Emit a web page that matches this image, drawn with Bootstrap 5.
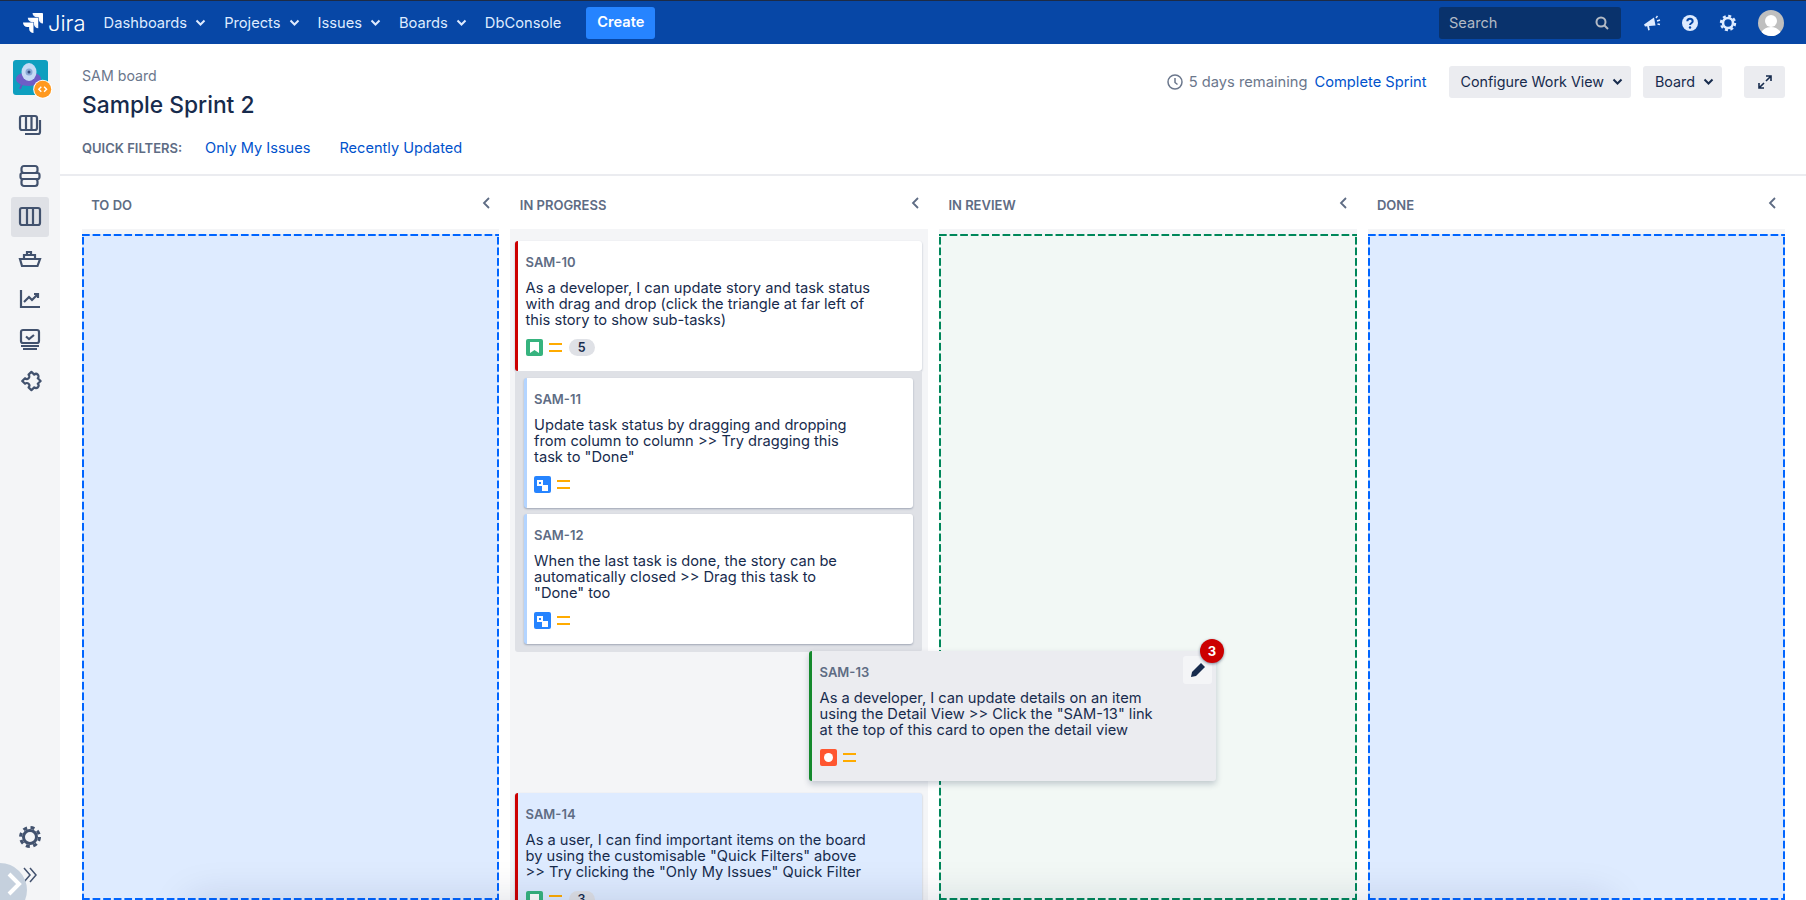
<!DOCTYPE html>
<html lang="en">
<head>
<meta charset="utf-8">
<title>Sample Sprint 2 - Jira</title>
<link rel="stylesheet" href="https://cdn.jsdelivr.net/npm/bootstrap@5.3.0/dist/css/bootstrap.min.css">
<style>
html,body{height:900px;overflow:hidden}
body{font-family:Inter,"Liberation Sans",sans-serif;color:#172b4d;font-size:14.6px;position:relative;background:#fff}
a{text-decoration:none}
.topbar{height:44px;background:#0747a6;border-top:1px solid #1d2b45;padding:1px 22px 0 23px;color:#fff;flex:none}
.brand-word{font-size:22px;font-weight:300;margin-left:5px;color:#fff;line-height:1}
.menu-row{margin-left:18px;gap:18px;font-size:14.7px}
.menu-row a{color:#deebff}
.menu-item{gap:8px}
.make-btn{background:#2684ff;color:#fff;font-weight:600;height:32px;width:69px;margin-left:25px;border-radius:3px;border:0;padding:0;font-size:14.6px}
.make-btn:hover{background:#2684ff;color:#fff}
.find-box{width:182px;height:32px;background:#09326c;border-radius:3px;padding:0 12px 0 10px;color:#b3bac5;font-size:14.6px}
.find-box span{margin-top:1px}
.bar-ico{width:38px}
.avatar-dot{width:26px;height:26px;border-radius:50%;background:#bfbfbf;margin-left:11px;overflow:hidden}
.shell{height:856px}
.rail{width:60px;background:#f4f5f7;flex:none;padding-top:16px;padding-bottom:6px;color:#42526e}
.tile{width:35px;height:35px;margin-left:13px;margin-bottom:10px;position:relative}
.tile svg{overflow:visible}
.rail-ico{height:40px;width:38px;margin-bottom:1px;margin-left:11px;border-radius:3px}
.rail-ico.on{background:#dfe1e6}
.rail-low{height:38px;width:38px;margin-left:11px}
.gap11{margin-bottom:11px}
.fold-knob{position:absolute;left:-27px;bottom:-17px;width:54px;height:54px;border-radius:50%;background:#c5d0dd}
.fold-knob svg{position:absolute;left:33px;top:9px}
.page-top{height:132px;border-bottom:2px solid #ebecf0;padding:22px 21px 0 22px;flex:none}
.crumb{color:#6b778c;font-size:14.2px;line-height:20px}
.sprint-name{font-size:22.8px;font-weight:500;line-height:30px;margin:4px 0 18px;color:#172b4d}
.qf-row{line-height:20px}
.qf-label{font-size:13px;font-weight:600;color:#5e6c84;width:123px}
.qf-row a{color:#0052cc;margin-right:29px;font-size:14.6px}
.days{color:#6b778c;font-size:14.7px;gap:6px;margin-right:7px}
.done-link{color:#0052cc;font-size:14.7px;margin-right:22px}
.grey-btn{background:#ebecf0;color:#172b4d;border:0;border-radius:3px;height:32px;padding:0 12px;font-size:14.3px;gap:8px}
.grey-btn:hover{background:#ebecf0;color:#172b4d}
.board-heads,.board-cols{display:grid;grid-template-columns:repeat(4,1fr);column-gap:11px;padding:0 21px 0 21.6px}
.board-heads{height:53px;flex:none;padding-top:6px}
.col-head{font-size:13px;font-weight:600;color:#5e6c84;padding:0 8px 0 9.6px;text-transform:uppercase}
.col-head svg{margin-top:-6px}
.board-cols{flex:1;min-height:0}
.lane{background:#f4f5f7;padding-top:5px;min-height:0;overflow:visible}
.lane-cards{padding:12px 6px 0 5px;margin-top:-5px}
.drop{height:100%;--dc:#0065ff;background-color:#deebff;background-image:linear-gradient(90deg,var(--dc) 70%,transparent 0),linear-gradient(90deg,var(--dc) 70%,transparent 0),linear-gradient(0deg,var(--dc) 70%,transparent 0),linear-gradient(0deg,var(--dc) 70%,transparent 0);background-size:10.6px 2px,10.6px 2px,2px 10.6px,2px 10.6px;background-position:0 0,0 100%,0 0,100% 0;background-repeat:repeat-x,repeat-x,repeat-y,repeat-y}
.drop.go{--dc:#00875a;background-color:#f2f8f5}
.tkt{background:#fff;border-radius:3px;border-left:3.5px solid #c00;padding:13px 8px 0 7.5px;height:130px;box-shadow:0 1px 2px rgba(9,30,66,.3);line-height:16px;font-size:14.65px;color:#172b4d}
.tkt-key{font-size:13px;font-weight:600;color:#5e6c84;line-height:16px;margin-bottom:10px}
.tkt-meta{margin-top:11px;gap:6px;height:17px}
.kids{background:#dfe1e6;padding:7px 9px 8px;border-radius:0 0 3px 3px;width:407px}
.kid{border-left:3px solid #b3d4ff;padding-left:7px;margin-bottom:6px}
.kid:last-child{margin-bottom:0}
.slot{height:141px;position:relative}
.float-tkt{position:absolute;left:294px;top:-1px;width:407px;background:#ebecf0;border-left-color:#14892c;z-index:5;box-shadow:0 3px 6px rgba(9,30,66,.22)}
.blue-tkt{background:#deebff}
.pen-box{position:absolute;right:4px;top:5px;width:29px;height:28px;background:#f4f5f7;border-radius:3px}
.red-count{position:absolute;right:-8px;top:-12px;width:24px;height:24px;border-radius:50%;background:#c00;color:#fff;font-size:13px;font-weight:700;box-shadow:0 1px 3px rgba(9,30,66,.5)}
.sq{width:17px;height:17px;border-radius:2px;flex:none}
.sq-g{background:#36b37e}.sq-b{background:#2684ff}.sq-r{background:#ff5630}
.pts{min-width:26px;height:17px;border-radius:9px;background:#dfe1e6;font-size:12.5px;font-weight:600;color:#172b4d;margin-left:1px}
.floor-shade{position:absolute;left:190px;width:1420px;top:900px;height:40px;box-shadow:0 0 40px rgba(9,30,66,.15);pointer-events:none;z-index:8;background:#999}
</style>
</head>
<body>
<nav class="topbar d-flex align-items-center">
  <svg width="20" height="20" viewBox="0 0 24 24"><defs><linearGradient id="fade" x1="1" y1="0" x2="0" y2="1"><stop offset=".35" stop-color="#fff"/><stop offset="1" stop-color="#b9cff2"/></linearGradient></defs><path fill="#fff" d="M11.571 11.513H0a5.218 5.218 0 0 0 5.232 5.215h2.13v2.057A5.215 5.215 0 0 0 12.575 24V12.518a1.005 1.005 0 0 0-1.005-1.005z"/><path fill="url(#fade)" d="M17.294 5.757H5.736a5.215 5.215 0 0 0 5.215 5.214h2.129v2.058a5.218 5.218 0 0 0 5.215 5.214V6.758a1.001 1.001 0 0 0-1.001-1.001z"/><path fill="url(#fade)" d="M23.013 0H11.455a5.215 5.215 0 0 0 5.215 5.215h2.129v2.057A5.215 5.215 0 0 0 24 12.483V1.005A1.001 1.001 0 0 0 23.013 0z"/></svg>
  <span class="brand-word">Jira</span>
  <div class="menu-row d-flex align-items-center">
    <a href="#" class="menu-item d-flex align-items-center">Dashboards <svg width="11" height="8" viewBox="0 0 11 8"><path d="M1.5 1.5l4 4 4-4" fill="none" stroke="#deebff" stroke-width="2"/></svg></a>
    <a href="#" class="menu-item d-flex align-items-center">Projects <svg width="11" height="8" viewBox="0 0 11 8"><path d="M1.5 1.5l4 4 4-4" fill="none" stroke="#deebff" stroke-width="2"/></svg></a>
    <a href="#" class="menu-item d-flex align-items-center">Issues <svg width="11" height="8" viewBox="0 0 11 8"><path d="M1.5 1.5l4 4 4-4" fill="none" stroke="#deebff" stroke-width="2"/></svg></a>
    <a href="#" class="menu-item d-flex align-items-center">Boards <svg width="11" height="8" viewBox="0 0 11 8"><path d="M1.5 1.5l4 4 4-4" fill="none" stroke="#deebff" stroke-width="2"/></svg></a>
    <a href="#">DbConsole</a>
  </div>
  <button class="btn make-btn" type="button">Create</button>
  <div class="find-box ms-auto d-flex align-items-center justify-content-between">
    <span>Search</span>
    <svg width="14" height="14" viewBox="0 0 14 14" fill="none" stroke="#b3bac5" stroke-width="2"><circle cx="6" cy="6" r="4.5"/><path d="M9.5 9.5l3.5 3.5"/></svg>
  </div>
  <div class="d-flex align-items-center ms-2 ps-1">
    <div class="bar-ico d-flex justify-content-center"><svg width="18" height="18" viewBox="0 0 18 18" fill="#deebff"><path d="M1 10.500L11 3.500l1.500 8-6.500.6.800 3.900-1.600.4-1-4.200-2.200.2z"/><path d="M13 4l1.500-2M14 7l3-1M14.500 10l2.500.5" stroke="#deebff" stroke-width="1.400" fill="none"/></svg></div>
    <div class="bar-ico d-flex justify-content-center"><svg width="18" height="18" viewBox="0 0 18 18"><circle cx="9" cy="9" r="8" fill="#deebff"/><path d="M6.300 7.200c0-3.400 5.400-3.400 5.400 0 0 2-2.700 2-2.700 3.800" fill="none" stroke="#0747a6" stroke-width="2"/><circle cx="9" cy="13.500" r="1.200" fill="#0747a6"/></svg></div>
    <div class="bar-ico d-flex justify-content-center"><svg width="18" height="18" viewBox="0 0 18 18"><circle cx="9" cy="9" r="5" fill="none" stroke="#deebff" stroke-width="2.600"/><circle cx="9" cy="9" r="7" fill="none" stroke="#deebff" stroke-width="2.400" stroke-dasharray="3 2.500"/></svg></div>
    <div class="avatar-dot"><svg width="26" height="26" viewBox="0 0 26 26"><circle cx="13" cy="11" r="6" fill="#fff"/><path d="M2 26c1-6 6-9 11-9s10 3 11 9z" fill="#fff"/></svg></div>
  </div>
</nav>
<div class="shell d-flex">
  <aside class="rail d-flex flex-column">
    <div class="tile">
      <svg width="35" height="35" viewBox="0 0 35 35"><rect width="35" height="35" rx="3" fill="#0e9fbf"/><path d="M9 24l-2 5M22 24l2 5" stroke="#6554c0" stroke-width="2"/><ellipse cx="15.500" cy="19" rx="12.500" ry="7" fill="#6e5dc6"/><ellipse cx="16" cy="12" rx="7.500" ry="9" fill="#c6dbf5"/><circle cx="16" cy="12" r="3.500" fill="#8aa9d6"/><circle cx="16" cy="12" r="1.500" fill="#344a7d"/><circle cx="29.700" cy="29.300" r="9.500" fill="#fff"/><circle cx="29.700" cy="29.300" r="8.500" fill="#ff991f"/><path d="M28.300 26.800l-2.500 2.500 2.500 2.500M31.100 26.800l2.500 2.500-2.500 2.500" fill="none" stroke="#fff" stroke-width="1.400"/></svg>
    </div>
    <div class="rail-ico gap11 d-flex align-items-center justify-content-center"><svg width="24" height="24" viewBox="0 0 24 24" fill="none" stroke="currentColor" stroke-width="2.200"><rect x="2" y="3" width="17" height="14" rx="2"/><path d="M8 3v14M13.500 3v14M22 7v12a2 2 0 0 1-2 2H7"/></svg></div>
    <div class="rail-ico d-flex align-items-center justify-content-center"><svg width="24" height="24" viewBox="0 0 24 24" fill="none" stroke="currentColor" stroke-width="2.200"><rect x="3.500" y="2" width="16" height="7" rx="2.500"/><rect x="2.500" y="9" width="19" height="6" rx="2"/><rect x="3.500" y="15" width="16" height="7" rx="2.500"/></svg></div>
    <div class="rail-ico on d-flex align-items-center justify-content-center"><svg width="24" height="24" viewBox="0 0 24 24" fill="none" stroke="currentColor" stroke-width="2.200"><rect x="2" y="3" width="20" height="17" rx="2"/><path d="M9 3v17M15 3v17"/></svg></div>
    <div class="rail-ico d-flex align-items-center justify-content-center"><svg width="24" height="24" viewBox="0 0 24 24" fill="none" stroke="currentColor" stroke-width="2.200"><path d="M2 13h20l-2.500 7H4zM6 13V9h11v4M9 9V6h4v3"/></svg></div>
    <div class="rail-ico d-flex align-items-center justify-content-center"><svg width="24" height="24" viewBox="0 0 24 24" fill="none" stroke="currentColor" stroke-width="2.200"><path d="M3 3v17h19M6 15l5-5 3 3 6-6M16 7h4v4"/></svg></div>
    <div class="rail-ico d-flex align-items-center justify-content-center"><svg width="24" height="24" viewBox="0 0 24 24" fill="none" stroke="currentColor" stroke-width="2.200"><rect x="3" y="2" width="18" height="13" rx="2"/><path d="M8 8.500l3 2.500 5-4M3 18h18M5 21h14"/></svg></div>
    <div class="rail-ico d-flex align-items-center justify-content-center"><svg width="24" height="24" viewBox="-12 -12 24 24" fill="none" stroke="currentColor" stroke-width="2.200"><path transform="rotate(45) translate(1 -1)" stroke-linejoin="round" d="M-6.500 -6.500H-2.500a2.500 2.500 0 1 1 5 0H6.500V-2.500a2.500 2.500 0 1 1 0 5V6.500H2.500a2.500 2.500 0 1 0 -5 0H-6.500V2.500a2.500 2.500 0 1 0 0 -5Z"/></svg></div>
    <div class="rail-low mt-auto d-flex align-items-center justify-content-center"><svg width="24" height="24" viewBox="0 0 24 24"><circle cx="12" cy="12" r="6.500" fill="none" stroke="currentColor" stroke-width="3"/><circle cx="12" cy="12" r="9.500" fill="none" stroke="currentColor" stroke-width="3" stroke-dasharray="4 3.500"/></svg></div>
    <div class="rail-low d-flex align-items-center justify-content-center"><svg width="18" height="18" viewBox="0 0 18 18" fill="none" stroke="currentColor" stroke-width="1.500"><path d="M3 2l6 7-6 7M9 2l6 7-6 7"/></svg></div>
    <div class="fold-knob"><svg width="16" height="24" viewBox="0 0 16 24" fill="none" stroke="#fff" stroke-width="4"><path d="M3 2l10 10L3 22"/></svg></div>
  </aside>
  <main class="flex-grow-1 d-flex flex-column" style="min-width:0">
    <header class="page-top d-flex justify-content-between align-items-start">
      <div>
        <div class="crumb">SAM board</div>
        <h1 class="sprint-name">Sample Sprint 2</h1>
        <div class="qf-row d-flex align-items-center">
          <span class="qf-label">QUICK FILTERS:</span>
          <a href="#">Only My Issues</a>
          <a href="#">Recently Updated</a>
        </div>
      </div>
      <div class="d-flex align-items-center">
        <span class="days d-flex align-items-center"><svg width="16" height="16" viewBox="0 0 16 16" fill="none" stroke="#6b778c" stroke-width="1.500"><circle cx="8" cy="8" r="7"/><path d="M8 4v4.500l2.500 2"/></svg>5 days remaining</span>
        <a href="#" class="done-link">Complete Sprint</a>
        <button class="btn grey-btn d-flex align-items-center me-2 pe-2" type="button">Configure Work View <svg width="11" height="8" viewBox="0 0 11 8"><path d="M1.500 1.500l4 4 4-4" fill="none" stroke="#172b4d" stroke-width="2"/></svg></button>
        <button class="btn grey-btn d-flex align-items-center pe-2 ms-1" type="button">Board <svg width="11" height="8" viewBox="0 0 11 8"><path d="M1.500 1.500l4 4 4-4" fill="none" stroke="#172b4d" stroke-width="2"/></svg></button>
        <button class="btn grey-btn d-flex align-items-center justify-content-center" type="button" aria-label="Expand" style="width:41px;margin-left:22px"><svg width="16" height="16" viewBox="0 0 16 16" fill="none" stroke="#172b4d" stroke-width="1.600"><path d="M9 2h5v5M14 2L9 7M7 14H2V9M2 14l5-5"/></svg></button>
      </div>
    </header>
    <div class="board-heads">
      <div class="col-head d-flex align-items-center justify-content-between"><span>To Do</span><svg width="10" height="14" viewBox="0 0 10 14"><path d="M8 2L3 7l5 5" fill="none" stroke="#5e6c84" stroke-width="1.800"/></svg></div>
      <div class="col-head d-flex align-items-center justify-content-between"><span>In Progress</span><svg width="10" height="14" viewBox="0 0 10 14"><path d="M8 2L3 7l5 5" fill="none" stroke="#5e6c84" stroke-width="1.800"/></svg></div>
      <div class="col-head d-flex align-items-center justify-content-between"><span>In Review</span><svg width="10" height="14" viewBox="0 0 10 14"><path d="M8 2L3 7l5 5" fill="none" stroke="#5e6c84" stroke-width="1.800"/></svg></div>
      <div class="col-head d-flex align-items-center justify-content-between"><span>Done</span><svg width="10" height="14" viewBox="0 0 10 14"><path d="M8 2L3 7l5 5" fill="none" stroke="#5e6c84" stroke-width="1.800"/></svg></div>
    </div>
    <div class="board-cols">
      <div class="lane"><div class="drop"></div></div>
      <div class="lane">
        <div class="lane-cards">
          <article class="tkt">
            <div class="tkt-key">SAM-10</div>
            <div>As a developer, I can update story and task status<br>with drag and drop (click the triangle at far left of<br>this story to show sub-tasks)</div>
            <div class="tkt-meta d-flex align-items-center">
              <span class="sq sq-g d-flex align-items-center justify-content-center"><svg width="9" height="11" viewBox="0 0 9 11"><path d="M0 0h9v11L4.500 8 0 11z" fill="#fff"/></svg></span>
              <svg width="13" height="9" viewBox="0 0 13 9"><path d="M0 1h13M0 8h13" stroke="#ffab00" stroke-width="2"/></svg>
              <span class="pts d-flex align-items-center justify-content-center">5</span>
            </div>
          </article>
          <div class="kids">
            <article class="tkt kid">
              <div class="tkt-key">SAM-11</div>
              <div>Update task status by dragging and dropping<br>from column to column &gt;&gt; Try dragging this<br>task to "Done"</div>
              <div class="tkt-meta d-flex align-items-center">
                <span class="sq sq-b"><svg width="17" height="17" viewBox="0 0 17 17"><rect x="3" y="3" width="6" height="6" fill="#fff"/><rect x="8" y="8" width="6" height="6" fill="#fff"/><rect x="5" y="5" width="2" height="2" fill="#2684ff"/></svg></span>
                <svg width="13" height="9" viewBox="0 0 13 9"><path d="M0 1h13M0 8h13" stroke="#ffab00" stroke-width="2"/></svg>
              </div>
            </article>
            <article class="tkt kid">
              <div class="tkt-key">SAM-12</div>
              <div>When the last task is done, the story can be<br>automatically closed &gt;&gt; Drag this task to<br>"Done" too</div>
              <div class="tkt-meta d-flex align-items-center">
                <span class="sq sq-b"><svg width="17" height="17" viewBox="0 0 17 17"><rect x="3" y="3" width="6" height="6" fill="#fff"/><rect x="8" y="8" width="6" height="6" fill="#fff"/><rect x="5" y="5" width="2" height="2" fill="#2684ff"/></svg></span>
                <svg width="13" height="9" viewBox="0 0 13 9"><path d="M0 1h13M0 8h13" stroke="#ffab00" stroke-width="2"/></svg>
              </div>
            </article>
          </div>
          <div class="slot">
            <article class="tkt float-tkt">
              <div class="tkt-key">SAM-13</div>
              <div>As a developer, I can update details on an item<br>using the Detail View &gt;&gt; Click the "SAM-13" link<br>at the top of this card to open the detail view</div>
              <div class="tkt-meta d-flex align-items-center">
                <span class="sq sq-r d-flex align-items-center justify-content-center"><svg width="9" height="9" viewBox="0 0 9 9"><circle cx="4.500" cy="4.500" r="4.500" fill="#fff"/></svg></span>
                <svg width="13" height="9" viewBox="0 0 13 9"><path d="M0 1h13M0 8h13" stroke="#ffab00" stroke-width="2"/></svg>
              </div>
              <div class="pen-box d-flex align-items-center justify-content-center"><svg width="16" height="16" viewBox="0 0 16 16"><path d="M11 1l4 4-9 9-5 1 1-5z" fill="#172b4d"/></svg></div>
              <div class="red-count d-flex align-items-center justify-content-center">3</div>
            </article>
          </div>
          <article class="tkt blue-tkt">
            <div class="tkt-key">SAM-14</div>
            <div>As a user, I can find important items on the board<br>by using the customisable "Quick Filters" above<br>&gt;&gt; Try clicking the "Only My Issues" Quick Filter</div>
            <div class="tkt-meta d-flex align-items-center">
              <span class="sq sq-g d-flex align-items-center justify-content-center"><svg width="9" height="11" viewBox="0 0 9 11"><path d="M0 0h9v11L4.500 8 0 11z" fill="#fff"/></svg></span>
              <svg width="13" height="9" viewBox="0 0 13 9"><path d="M0 1h13M0 8h13" stroke="#ffab00" stroke-width="2"/></svg>
              <span class="pts d-flex align-items-center justify-content-center">3</span>
            </div>
          </article>
        </div>
      </div>
      <div class="lane"><div class="drop go"></div></div>
      <div class="lane"><div class="drop"></div></div>
    </div>
  </main>
</div>
<div class="floor-shade"></div>
<script src="https://cdn.jsdelivr.net/npm/bootstrap@5.3.0/dist/js/bootstrap.bundle.min.js"></script>
</body>
</html>
